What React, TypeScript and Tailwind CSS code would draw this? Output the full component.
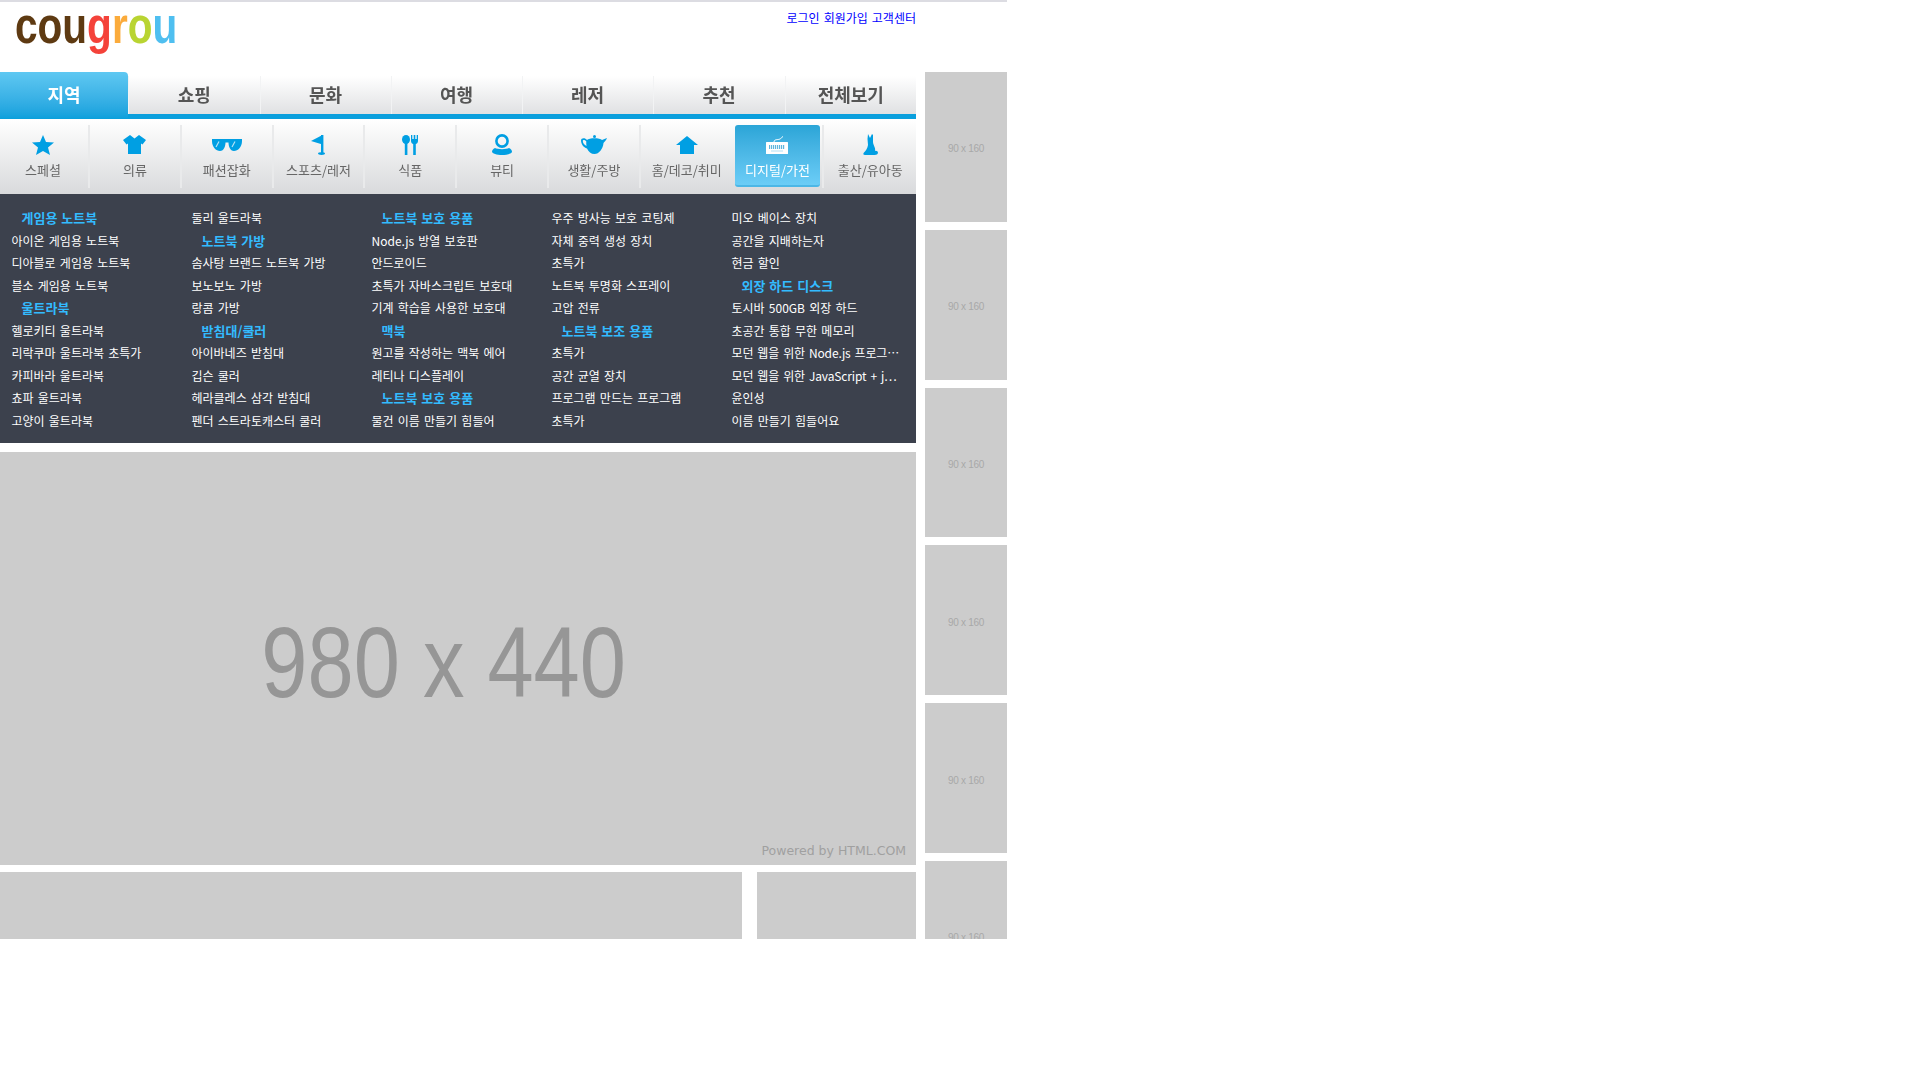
import React from "react";

const KR = "font-['Noto_Sans_CJK_KR','Noto_Sans',sans-serif]";
const B = "#009fe3";

type Row = { t: string; h?: boolean };
const h = (t: string): Row => ({ t, h: true });
const r = (t: string): Row => ({ t });

const columns: Row[][] = [
  [h("게임용 노트북"), r("아이온 게임용 노트북"), r("디아블로 게임용 노트북"), r("블소 게임용 노트북"), h("울트라북"), r("헬로키티 울트라북"), r("리락쿠마 울트라북 초특가"), r("카피바라 울트라북"), r("쵸파 울트라북"), r("고양이 울트라북")],
  [r("둘리 울트라북"), h("노트북 가방"), r("솜사탕 브랜드 노트북 가방"), r("보노보노 가방"), r("랑콤 가방"), h("받침대/쿨러"), r("아이바네즈 받침대"), r("깁슨 쿨러"), r("헤라클레스 삼각 받침대"), r("펜더 스트라토캐스터 쿨러")],
  [h("노트북 보호 용품"), r("Node.js 방열 보호판"), r("안드로이드"), r("초특가 자바스크립트 보호대"), r("기계 학습을 사용한 보호대"), h("맥북"), r("원고를 작성하는 맥북 에어"), r("레티나 디스플레이"), h("노트북 보호 용품"), r("물건 이름 만들기 힘들어")],
  [r("우주 방사능 보호 코팅제"), r("자체 중력 생성 장치"), r("초특가"), r("노트북 투명화 스프레이"), r("고압 전류"), h("노트북 보조 용품"), r("초특가"), r("공간 균열 장치"), r("프로그램 만드는 프로그램"), r("초특가")],
  [r("미오 베이스 장치"), r("공간을 지배하는자"), r("현금 할인"), h("외장 하드 디스크"), r("토시바 500GB 외장 하드"), r("초공간 통합 무한 메모리"), r("모던 웹을 위한 Node.js 프로그⋯"), r("모던 웹을 위한 JavaScript + j⋯"), r("윤인성"), r("이름 만들기 힘들어요")],
];

const tabs = [
  { t: "지역", w: "w-[128px]" },
  { t: "쇼핑", w: "w-[131.6px]" },
  { t: "문화", w: "w-[131px]" },
  { t: "여행", w: "w-[131px]" },
  { t: "레저", w: "w-[131px]" },
  { t: "추천", w: "w-[132px]" },
  { t: "전체보기", w: "flex-1" },
];

const Star = () => (
  <svg width="22" height="20" viewBox="0 0 22 20"><polygon fill={B} points="11,0 14,7 22,7.6 16,12.6 18,20 11,16 4,20 6,12.6 0,7.6 8,7" /></svg>
);
const Shirt = () => (
  <svg width="23" height="19" viewBox="0 0 23 19"><path fill={B} d="M7 0 L11.5 3.5 L16 0 L23 5 L19.5 9.5 L18 8.5 L18 19 L5 19 L5 8.5 L3.5 9.5 L0 5Z" /></svg>
);
const Glasses = () => (
  <svg width="30" height="13" viewBox="0 0 30 13">
    <path fill={B} d="M0 1 H30 V3 C30 9 26 13 22 13 C18 13 16.5 8 16.5 4.5 H13.5 C13.5 8 12 13 8 13 C4 13 0 9 0 3 Z" />
    <path stroke="#fff" strokeWidth="1.2" fill="none" d="M4 9 L7 3.5 M20 9 L23 3.5" opacity="0.7" />
  </svg>
);
const Flag = () => (
  <svg width="14" height="20" viewBox="0 0 14 20">
    <path fill={B} d="M11.5 0 V9.5 L0 6 Z" />
    <rect fill={B} x="10" y="0" width="2.4" height="18" />
    <ellipse fill={B} cx="10.5" cy="18.6" rx="3.5" ry="1.4" />
  </svg>
);
const Cutlery = () => (
  <svg width="16" height="20" viewBox="0 0 16 20">
    <ellipse fill={B} cx="4" cy="4.5" rx="4" ry="4.5" />
    <rect fill={B} x="2.8" y="6" width="2.6" height="14" />
    <path fill={B} d="M9 0 H10.3 V4 H11.7 V0 H13.3 V4 H14.7 V0 H16 V6 C16 8 14.5 9 13.8 9 V20 H11.2 V9 C10.5 9 9 8 9 6 Z" />
  </svg>
);
const Mirror = () => (
  <svg width="20" height="21" viewBox="0 0 20 21">
    <circle cx="10" cy="7" r="5.6" fill="none" stroke={B} strokeWidth="2.6" />
    <path fill={B} d="M3 14 C5 15.5 15 15.5 17 14 C19 15 20 16.5 20 17.5 C20 19.8 15 21 10 21 C5 21 0 19.8 0 17.5 C0 16.5 1 15 3 14Z" />
  </svg>
);
const Teapot = () => (
  <svg width="26" height="19" viewBox="0 0 26 19">
    <circle cx="13.5" cy="1.5" r="1.5" fill={B} />
    <path fill={B} fillRule="evenodd" d="M6 5 C8 2.5 19 2.5 21 5 L26 3 C25 5.5 23.5 6.5 22.5 8 C22 14 18 19 13.5 19 C10 19 7.5 17 6 13.5 C2.5 12.5 0 9 0 5.5 C0 3 4 2.5 6 5Z M5.3 6.5 C4 4.5 1.8 4.5 1.8 6 C1.8 8 3.5 10 5.5 11 C5.2 9.5 5.2 8 5.3 6.5Z" />
  </svg>
);
const House = () => (
  <svg width="22" height="18" viewBox="0 0 22 18">
    <path fill={B} d="M11 0 L22 9 H18 V18 H4 V9 H0 Z" />
  </svg>
);
const Keyboard = () => (
  <svg width="22" height="18" viewBox="0 0 22 18">
    <path d="M8 6 C8 3 12 4 14 3 C15 2.5 15.5 1.5 17 0.5" fill="none" stroke="#fff" strokeWidth="1" />
    <rect x="0" y="6" width="22" height="12" rx="0.5" fill="#fff" />
    <path d="M3 10 H19 M3 12 H19" stroke="#2b9fd2" strokeWidth="1.6" strokeDasharray="1.2 0.8" />
    <path d="M5 15 H17" stroke="#bfe4f5" strokeWidth="1.2" />
  </svg>
);
const Rabbit = () => (
  <svg width="15" height="21" viewBox="0 0 15 21">
    <path fill={B} d="M5 0 L7 4 L9 0 L10 1 L10 8 C10 10 11 11 11.5 13 C12.5 15 12 16 12 17 C13.5 16.5 15 17.5 15 19 C14.5 21 12 21 10 21 H2 C0 21 0 19.5 1 18.5 C3 17 4.5 14 5 11 C5 9 4.5 7 4.5 5 Z" />
  </svg>
);

const cats = [
  { t: "스페셜", I: Star },
  { t: "의류", I: Shirt },
  { t: "패션잡화", I: Glasses },
  { t: "스포츠/레저", I: Flag },
  { t: "식품", I: Cutlery },
  { t: "뷰티", I: Mirror },
  { t: "생활/주방", I: Teapot },
  { t: "홈/데코/취미", I: House },
  { t: "디지털/가전", I: Keyboard, active: true },
  { t: "출산/유아동", I: Rabbit },
];

const logo: [string, string][] = [
  ["c", "text-[#5e3a12]"],
  ["o", "text-[#5e3a12]"],
  ["u", "text-[#5e3a12]"],
  ["g", "text-[#f4423a]"],
  ["r", "text-[#fbab3b]"],
  ["o", "text-[#b9d432]"],
  ["u", "text-[#4fbff0]"],
];

const Ad = () => (
  <div className="w-[82px] h-[149.8px] shrink-0 bg-[#cccccc] flex items-center justify-center pt-[4px]">
    <span className="text-[10px] text-[#a8a8a8] font-['Liberation_Sans',sans-serif] tracking-[-0.3px]">90 x 160</span>
  </div>
);

export default function App() {
  return (
    <div className="w-[1007px] h-[939px] overflow-hidden bg-white">
      <div className="h-[2px] bg-[#dcdce2]" />
      <header className="w-[916px] h-[70px] flex justify-between">
        <div className="ml-[15px] h-[46px] origin-left scale-x-[0.78] whitespace-nowrap blur-[0.4px] font-['Liberation_Sans',sans-serif] font-bold text-[52px] leading-[46px]">
          {logo.map(([c, cls], i) => (
            <span key={i} className={cls}>{c}</span>
          ))}
        </div>
        <nav className={`pt-[8px] flex gap-[4px] text-[12px] leading-[15px] text-[#0000ff] ${KR}`}>
          <a>로그인</a>
          <a>회원가입</a>
          <a>고객센터</a>
        </nav>
      </header>
      <div className="flex gap-[9px] items-start">
        <main className="w-[916px] shrink-0">
          <div className="h-[47px] flex items-end relative">
            {tabs.map((tab, i) =>
              i === 0 ? (
                <div key={tab.t} className={`${tab.w} h-[47px] rounded-tr-[4px] bg-gradient-to-b from-[#5ec8f2] to-[#09a0dc] flex items-center justify-center pb-[2px] text-white text-[18px] font-bold blur-[0.3px] ${KR}`}>
                  {tab.t}
                </div>
              ) : (
                <div key={tab.t} className={`${tab.w} h-[43px] flex flex-col last:rounded-tr-[4px]`}>
                  <div className={`flex-1 flex items-center justify-center bg-gradient-to-b from-white to-[#e0e1e3] border-l border-[#f2f3f4] text-[#555555] text-[18px] font-bold ${KR}`}>
                    <span className="blur-[0.3px]">{tab.t}</span>
                  </div>
                  <div className="h-[5.5px] bg-[#0a9fdd]" />
                </div>
              )
            )}
          </div>
          <div className="h-[75px] flex bg-gradient-to-b from-white to-[#d9dadc]">
            {cats.map((c, i) => (
              <div
                key={c.t}
                className={`${i === 0 ? "w-[90px] pr-[2px]" : i === 9 ? "flex-1" : "w-[91.8px]"} ${i === 9 || i === 7 ? "" : "border-r-2 border-[#e9eaeb]"} my-[6px] h-[63px] flex flex-col items-center justify-start relative`}
              >
                <div
                  className={`${c.active ? "w-[85px] h-[62px] rounded-[3px] bg-gradient-to-b from-[#2aa5d7] to-[#6bcdf7] border-b-[2px] border-[#4cb7e6]" : "w-full h-full"} flex flex-col items-center pt-[9px]`}
                >
                  <div className="h-[21px] flex items-center justify-center">
                    <c.I />
                  </div>
                  <span className={`mt-[6px] text-[13px] leading-[18px] whitespace-nowrap blur-[0.3px] ${c.active ? "text-white" : "text-[#666666]"} ${KR}`}>{c.t}</span>
                </div>
              </div>
            ))}
          </div>
          <div className={`h-[249px] bg-[#3c414d] flex pt-[13px] ${KR}`}>
            {columns.map((col, i) => (
              <ul key={i} className="w-[180px] pl-[11.5px] shrink-0">
                {col.map((row, j) => (
                  <li
                    key={j}
                    className={`h-[22.5px] leading-[22.5px] whitespace-nowrap ${row.h ? "pl-[10px] text-[13px] font-bold text-[#33bbff] [word-spacing:1px]" : "text-[12px] text-white [word-spacing:1.5px]"} ${row.t.includes("⋯") ? "tracking-[-0.15px]" : ""}`}
                  >
                    {row.t}
                  </li>
                ))}
              </ul>
            ))}
          </div>
          <div className="mt-[9px] h-[413px] bg-[#cccccc] relative flex items-center justify-center">
            <span className="text-[100px] leading-[100px] text-[#969696] font-['Liberation_Sans',sans-serif] scale-x-[0.83] whitespace-nowrap -translate-x-[14px] translate-y-[3px] blur-[0.3px]">980 x 440</span>
            <span className="absolute right-[10px] bottom-[6px] text-[12.5px] leading-[16px] text-[#a0a0a0] font-['DejaVu_Sans',sans-serif]">Powered by HTML.COM</span>
          </div>
          <div className="mt-[7px] flex justify-between">
            <div className="w-[742px] h-[100px] bg-[#cccccc]" />
            <div className="w-[159px] h-[100px] bg-[#cccccc]" />
          </div>
        </main>
        <aside className="w-[82px] flex flex-col gap-[8px] shrink-0">
          <Ad />
          <Ad />
          <Ad />
          <Ad />
          <Ad />
          <Ad />
        </aside>
      </div>
    </div>
  );
}
